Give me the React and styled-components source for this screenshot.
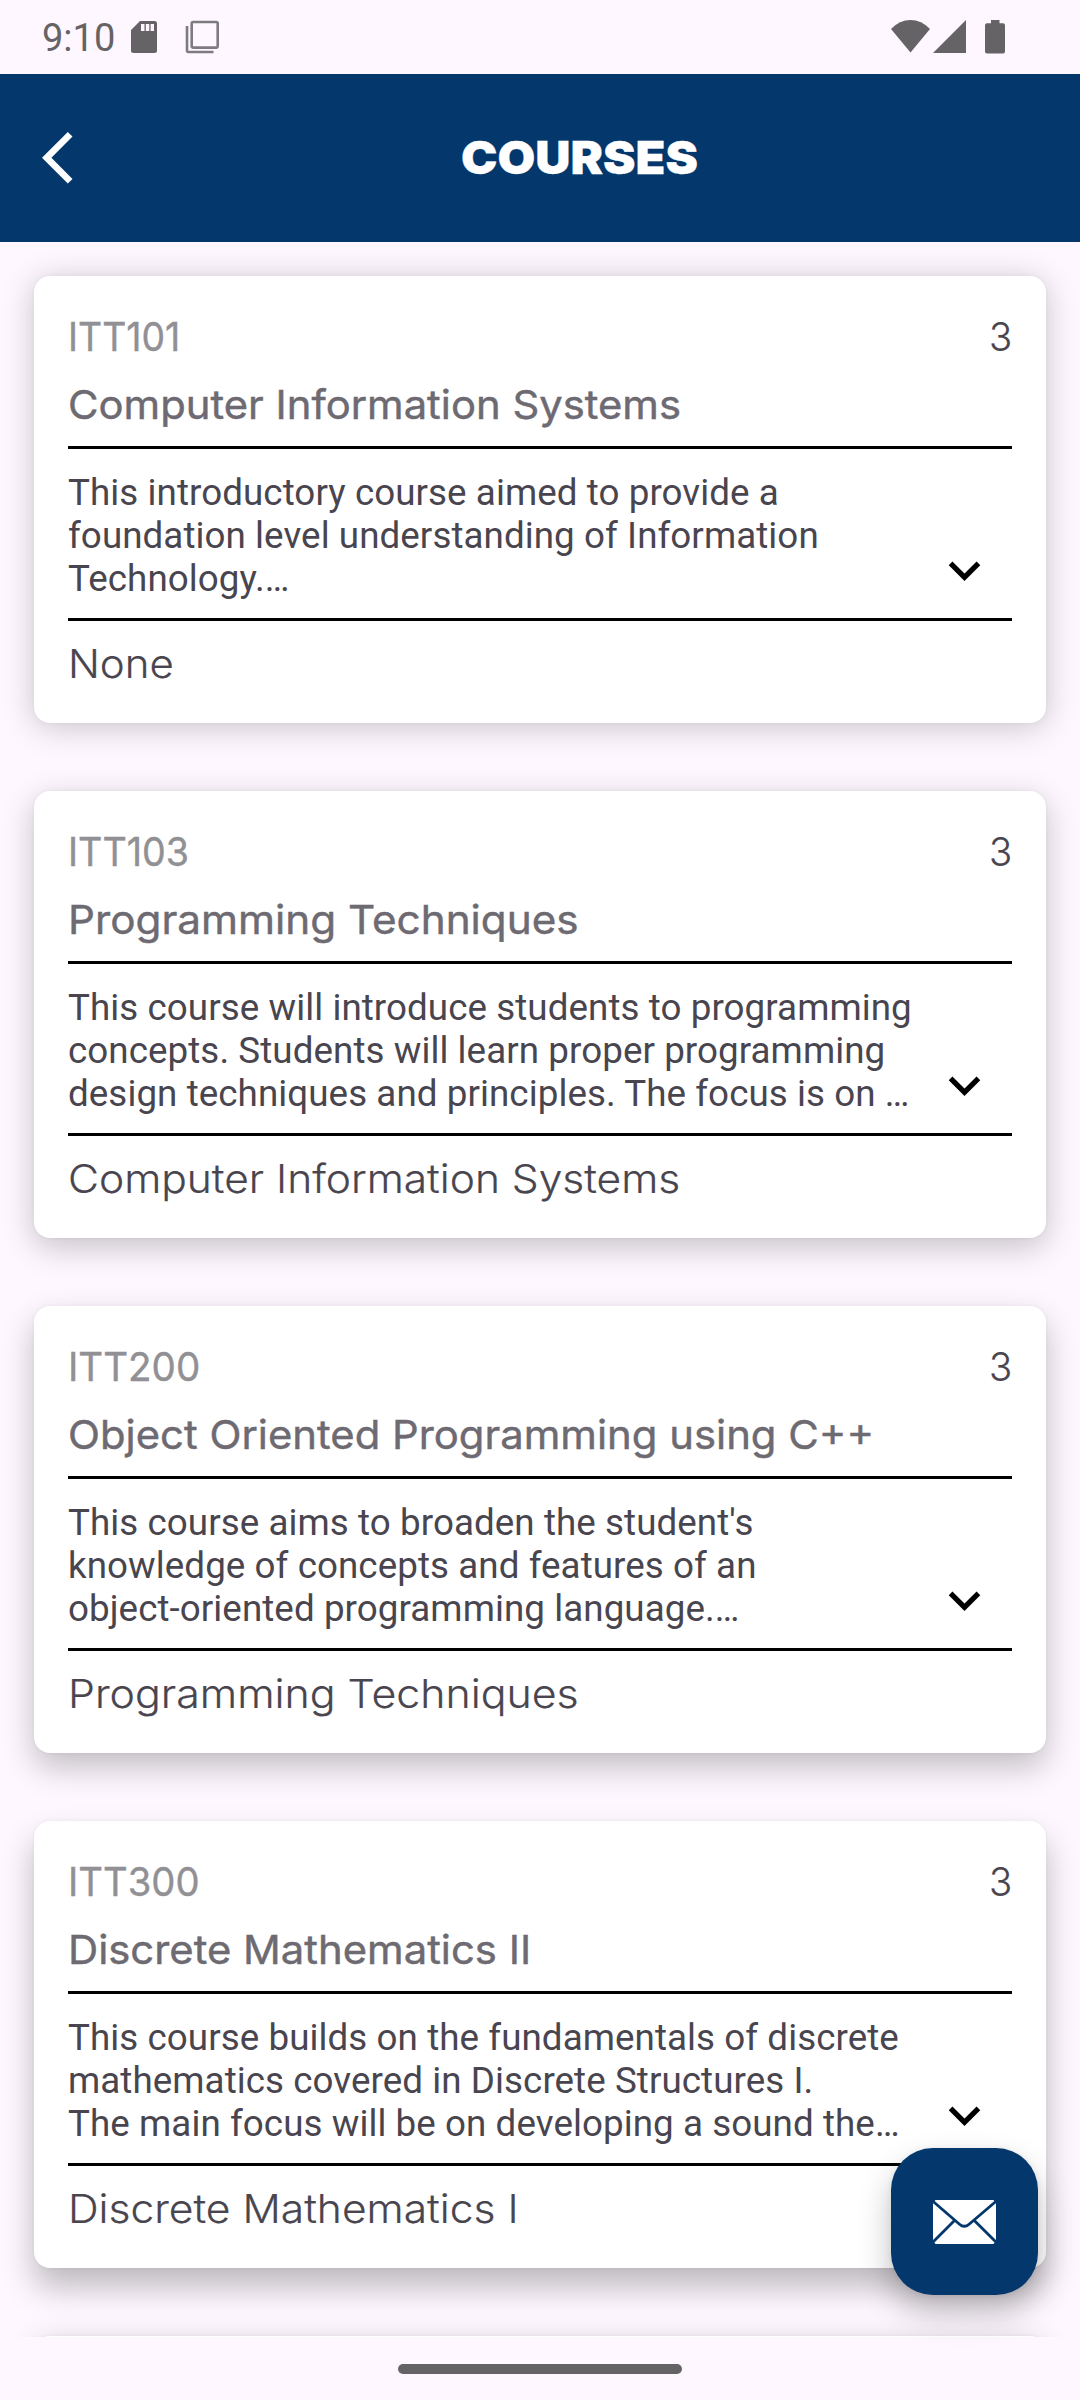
import React, { useLayoutEffect, useRef, useState } from "react";
import styled, { createGlobalStyle } from "styled-components";

const navy = "#04376c";
const surface = "#fef7ff";
const ink = "#49454f";
const system = "#666366";

const GlobalStyle = createGlobalStyle`
  * { box-sizing: border-box; }
  body { margin: 0; background: ${surface}; }
`;

const Screen = styled.div`
  position: relative;
  display: flex;
  flex-direction: column;
  width: 1080px;
  height: 2400px;
  overflow: hidden;
  background: ${surface};
  color: ${ink};
  font-family: Inter, "Noto Sans", sans-serif;
`;

const StatusBar = styled.div`
  display: flex;
  align-items: center;
  justify-content: space-between;
  flex: none;
  height: 74px;
  padding: 0 75px 0 42px;
  color: ${system};
`;

const StatusGroup = styled.div`
  display: flex;
  align-items: center;
`;

const Clock = styled.div`
  width: 89px;
  padding-top: 2px;
  font: 400 38px/44px Roboto, sans-serif;
`;

const Glyph = styled.svg`
  display: block;
  flex: none;
  width: ${(p) => p.$w}px;
  height: ${(p) => p.$h}px;
  margin-left: ${(p) => p.$gap || 0}px;
  overflow: visible;
`;

const Header = styled.header`
  display: flex;
  align-items: center;
  flex: none;
  height: 168px;
  padding-left: 42px;
  background: ${navy};
  color: #fff;
`;

const BackButton = styled.button`
  display: flex;
  width: 37px;
  padding: 0;
  border: 0;
  background: none;
  color: inherit;
`;

const HeaderTitle = styled.h1`
  display: flex;
  justify-content: center;
  flex: 1;
  margin: 0;
  font-size: 45.5px;
  font-weight: 900;
  line-height: 56px;
  -webkit-text-stroke: 0.3px currentColor;
`;

const List = styled.main`
  display: flex;
  flex-direction: column;
  flex: none;
  gap: 68px;
  height: 2095px;
  padding: 34px;
  overflow: hidden;
`;

const Card = styled.article`
  flex: none;
  height: 447px;
  padding: 34px;
  border-radius: 16px;
  background: #fff;
  box-shadow: 0 ${(p) => 4 + 5 * p.$row}px 32px rgba(0, 0, 0, ${(p) => 0.21 + 0.015 * p.$row}),
    0 0 4px rgba(0, 0, 0, 0.05);
`;

const TopRow = styled.div`
  display: flex;
  justify-content: space-between;
  height: 51px;
  margin-bottom: 17px;
`;

const Line = styled.div`
  height: 51px;
  font-size: 40px;
  font-weight: ${(p) => p.$weight};
  line-height: 54px;
  color: ${(p) => p.$color};
  -webkit-text-stroke: ${(p) => p.$stroke}px currentColor;
  white-space: nowrap;
`;

const FitBox = styled.span`
  display: block;
  width: ${(p) => p.$width}px;
  white-space: nowrap;
`;

const FitInner = styled.span`
  display: inline-block;
  transform-origin: 0 50%;
`;

const Rule = styled.hr`
  height: 3px;
  margin: ${(p) => p.$top || 0}px 0 0;
  border: 0;
  background: #000;
`;

const Details = styled.div`
  display: flex;
  justify-content: space-between;
  height: 169px;
  padding: 22px 16px 0 0;
`;

const Description = styled.p`
  margin: 0;
  font: 400 36.75px/43px Roboto, sans-serif;
  letter-spacing: 0.07px;
  white-space: pre;
`;

const Expand = styled.button`
  align-self: flex-end;
  padding: 0 0 16px;
  border: 0;
  background: none;
  color: #000;
`;

const Prerequisite = styled(Line)`
  margin-top: 16px;
`;

const NavArea = styled.footer`
  display: flex;
  justify-content: center;
  flex: 1;
  padding-top: 27px;
  background: ${surface};
`;

const Pill = styled.div`
  width: 284px;
  height: 10px;
  border-radius: 5px;
  background: ${system};
`;

const Fab = styled.button`
  position: absolute;
  right: 42px;
  bottom: 105px;
  display: flex;
  align-items: center;
  justify-content: center;
  width: 147px;
  height: 147px;
  padding: 0;
  border: 0;
  border-radius: 42px;
  background: ${navy};
  box-shadow: 0 17px 32px rgba(0, 0, 0, 0.25), 0 0 6px rgba(0, 0, 0, 0.06);
`;

function Fit({ width, children }) {
  const ref = useRef(null);
  const [scale, setScale] = useState(1);
  useLayoutEffect(() => {
    setScale(width / ref.current.offsetWidth);
  }, [width]);
  return (
    <FitBox $width={width}>
      <FitInner ref={ref} style={{ transform: `scaleX(${scale})` }}>
        {children}
      </FitInner>
    </FitBox>
  );
}

const courses = [
  {
    code: ["ITT101", 112],
    title: ["Computer Information Systems", 613],
    text: "This introductory course aimed to provide a\nfoundation level understanding of Information\nTechnology.…",
    pre: ["None", 106],
  },
  {
    code: ["ITT103", 121.5],
    title: ["Programming Techniques", 511],
    text: "This course will introduce students to programming\nconcepts. Students will learn proper programming\ndesign techniques and principles. The focus is on …",
    pre: ["Computer Information Systems", 612],
  },
  {
    code: ["ITT200", 132],
    title: ["Object Oriented Programming using C++", 806],
    text: "This course aims to broaden the student's\nknowledge of concepts and features of an\nobject-oriented programming language.…",
    pre: ["Programming Techniques", 511],
  },
  {
    code: ["ITT300", 132],
    title: ["Discrete Mathematics II", 463],
    text: "This course builds on the fundamentals of discrete\nmathematics covered in Discrete Structures I.\nThe main focus will be on developing a sound the…",
    pre: ["Discrete Mathematics I", 451],
  },
];

function CourseCard({ course, row }) {
  return (
    <Card $row={row}>
      <TopRow>
        <Line $weight={400} $stroke={0.4} $color="#919094">
          <Fit width={course.code[1]}>{course.code[0]}</Fit>
        </Line>
        <Line $weight={300} $stroke={0.2} $color={ink}>
          <Fit width={23}>3</Fit>
        </Line>
      </TopRow>
      <Line $weight={400} $stroke={0.45} $color="#6d6a72">
        <Fit width={course.title[1]}>{course.title[0]}</Fit>
      </Line>
      <Rule $top={17} />
      <Details>
        <Description>{course.text}</Description>
        <Expand aria-label="Expand">
          <Glyph $w={63} $h={63} viewBox="0 0 24 24">
            <path fill="currentColor" d="M7.41 8.59 12 13.17l4.59-4.58L18 10l-6 6-6-6z" />
          </Glyph>
        </Expand>
      </Details>
      <Rule />
      <Prerequisite $weight={300} $stroke={0.2} $color={ink}>
        <Fit width={course.pre[1]}>{course.pre[0]}</Fit>
      </Prerequisite>
    </Card>
  );
}

export default function App() {
  return (
    <Screen>
      <GlobalStyle />
      <StatusBar>
        <StatusGroup>
          <Clock>9:10</Clock>
          <Glyph $w={26} $h={32} viewBox="0 0 26 32">
            <path
              fill="currentColor"
              fillRule="evenodd"
              d="M9 0H23.5A2.5 2.5 0 0 1 26 2.5V29.5A2.5 2.5 0 0 1 23.5 32H2.5A2.5 2.5 0 0 1 0 29.5V9zM10 3V10H13.5V3zM14.8 3V10H18.3V3zM19.6 3V10H23V3z"
            />
          </Glyph>
          <Glyph $w={34} $h={34} $gap={28} viewBox="0 0 34 34">
            <g fill="none" stroke="#7e7b7f" strokeWidth="2.6">
              <rect x="6.7" y="2" width="26" height="25.6" rx="1.5" />
              <path d="M2 6V30.5Q2 32 3.5 32H28.5" />
            </g>
          </Glyph>
        </StatusGroup>
        <StatusGroup>
          <Glyph $w={39} $h={34} viewBox="0 0 39 34">
            <path fill="currentColor" d="M0 9Q8.5 0 19.5 0T39 9L19.5 32.5z" />
          </Glyph>
          <Glyph $w={33} $h={34} $gap={3} viewBox="0 0 33 34">
            <path fill="currentColor" d="M0 33L33 0V33z" />
          </Glyph>
          <Glyph $w={20} $h={34} $gap={19} viewBox="0 0 20 34">
            <path
              fill="currentColor"
              d="M6 0H14.5V3.2H18Q20 3.2 20 5.2V31.5Q20 33.5 18 33.5H2Q0 33.5 0 31.5V5.2Q0 3.2 2 3.2H6z"
            />
          </Glyph>
        </StatusGroup>
      </StatusBar>
      <Header>
        <BackButton aria-label="Back">
          <Glyph $w={31} $h={52} viewBox="0 0 31 52">
            <path fill="currentColor" d="M25.8 0L30.5 4.6 9.4 25.8 30.5 47 25.8 51.6 0 25.8z" />
          </Glyph>
        </BackButton>
        <HeaderTitle>
          <Fit width={237}>COURSES</Fit>
        </HeaderTitle>
      </Header>
      <List>
        {courses.map((course, row) => (
          <CourseCard key={course.code[0]} course={course} row={row} />
        ))}
        <Card $row={1} />
      </List>
      <NavArea>
        <Pill />
      </NavArea>
      <Fab aria-label="Send mail">
        <Glyph $w={63} $h={44} viewBox="0 0 63 44">
          <rect width="63" height="44" fill="#fff" />
          <g fill="none" stroke={navy} strokeWidth="2.8">
            <path d="M-1 .5L26.5 24.2Q31.3 28.4 36.1 24.2L64 .5" />
            <path d="M21.5 20.5L-1 43M41.3 20.5L64 43" />
          </g>
          <path fill={navy} d="M0 0H2.6L0 2.5zM63 0H60.4L63 2.5zM0 44V41L2.6 44zM63 44V41L60.4 44z" />
        </Glyph>
      </Fab>
    </Screen>
  );
}
